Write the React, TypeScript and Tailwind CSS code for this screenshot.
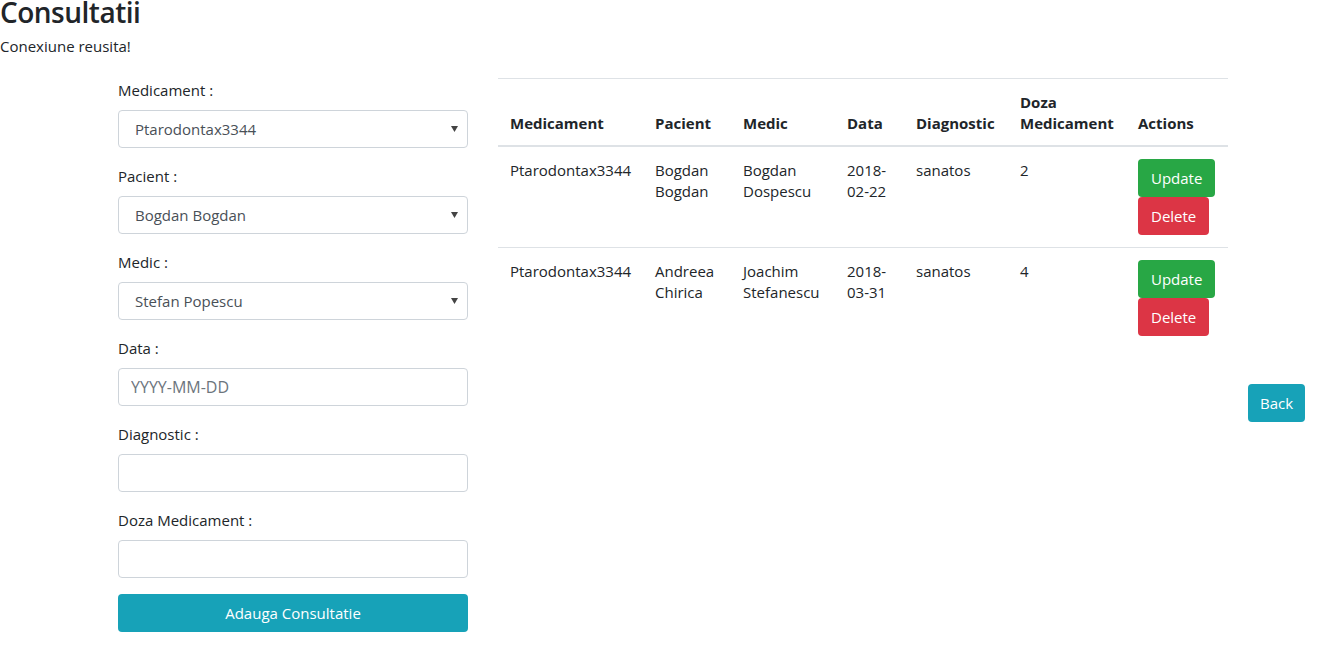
import { ReactNode } from "react";

const consultatii = [
  { medicament: "Ptarodontax3344", pacient: "Bogdan Bogdan", medic: "Bogdan Dospescu", data: "2018-02-22", diagnostic: "sanatos", doza: "2" },
  { medicament: "Ptarodontax3344", pacient: "Andreea Chirica", medic: "Joachim Stefanescu", data: "2018-03-31", diagnostic: "sanatos", doza: "4" },
];

const Field = ({ label, children }: { label: string; children: ReactNode }) => (
  <div className="mb-4">
    <label className="block leading-6 mb-2 text-[#212529]">{label}</label>
    {children}
  </div>
);

const SelectBox = ({ value }: { value: string }) => (
  <div className="h-[38px] w-full border border-[#ced4da] rounded bg-white flex items-center justify-between pl-4 pr-[9px] text-[#495057]">
    <span>{value}</span>
    <svg width="7" height="6" viewBox="0 0 7 6">
      <path d="M0 0 H7 L3.5 6 Z" fill="#444" />
    </svg>
  </div>
);

const TextBox = ({ placeholder }: { placeholder?: string }) => (
  <input
    type="text"
    placeholder={placeholder}
    className="h-[38px] w-full border border-[#ced4da] rounded bg-white px-3 text-[16px] text-[#495057] placeholder:text-[#6c757d] outline-none"
  />
);

const App = () => {
  return (
    <div className="min-h-screen bg-white text-[#212529] text-[15px] leading-[21px]" style={{ fontFamily: '"Open Sans", "Noto Sans", sans-serif' }}>
      <h3 className="text-[28px] leading-[24px] font-semibold tracking-[-0.5px]">Consultatii</h3>
      <p className="mt-[12px]">Conexiune reusita!</p>

      <div className="mt-[21px] flex items-start pl-[118px]">
        {/* Form */}
        <form className="w-[350px] shrink-0" onSubmit={(e) => e.preventDefault()}>
          <Field label="Medicament :">
            <SelectBox value="Ptarodontax3344" />
          </Field>
          <Field label="Pacient :">
            <SelectBox value="Bogdan Bogdan" />
          </Field>
          <Field label="Medic :">
            <SelectBox value="Stefan Popescu" />
          </Field>
          <Field label="Data :">
            <TextBox placeholder="YYYY-MM-DD" />
          </Field>
          <Field label="Diagnostic :">
            <TextBox />
          </Field>
          <Field label="Doza Medicament :">
            <TextBox />
          </Field>
          <button className="h-[38px] w-full rounded bg-[#17a2b8] text-white">Adauga Consultatie</button>
        </form>

        {/* Table */}
        <table className="ml-[30px] w-[730px] shrink-0 table-fixed border-collapse">
          <colgroup>
            <col className="w-[145px]" />
            <col className="w-[88px]" />
            <col className="w-[104px]" />
            <col className="w-[69px]" />
            <col className="w-[104px]" />
            <col className="w-[118px]" />
            <col className="w-[102px]" />
          </colgroup>
          <thead>
            <tr className="border-t border-[#dee2e6]">
              {["Medicament", "Pacient", "Medic", "Data", "Diagnostic", "Doza Medicament", "Actions"].map((h) => (
                <th key={h} className="px-3 pt-[13px] pb-[11px] text-left align-bottom font-bold border-b-2 border-[#dee2e6]">
                  {h}
                </th>
              ))}
            </tr>
          </thead>
          <tbody>
            {consultatii.map((c, i) => (
              <tr key={i} className="border-t border-[#dee2e6] align-top">
                <td className="px-3 pt-[13px] pb-3">{c.medicament}</td>
                <td className="px-3 pt-[13px] pb-3">{c.pacient}</td>
                <td className="px-3 pt-[13px] pb-3">{c.medic}</td>
                <td className="px-3 pt-[13px] pb-3 break-words">{c.data}</td>
                <td className="px-3 pt-[13px] pb-3">{c.diagnostic}</td>
                <td className="px-3 pt-[13px] pb-3">{c.doza}</td>
                <td className="p-3">
                  <div className="flex flex-col items-start">
                    <button className="h-[38px] px-[13px] rounded bg-[#28a745] text-white">Update</button>
                    <button className="h-[38px] px-[13px] rounded bg-[#dc3545] text-white">Delete</button>
                  </div>
                </td>
              </tr>
            ))}
          </tbody>
        </table>

        <button className="ml-5 mt-[306px] h-[38px] px-3 rounded bg-[#17a2b8] text-white">Back</button>
      </div>
    </div>
  );
};

export default App;
